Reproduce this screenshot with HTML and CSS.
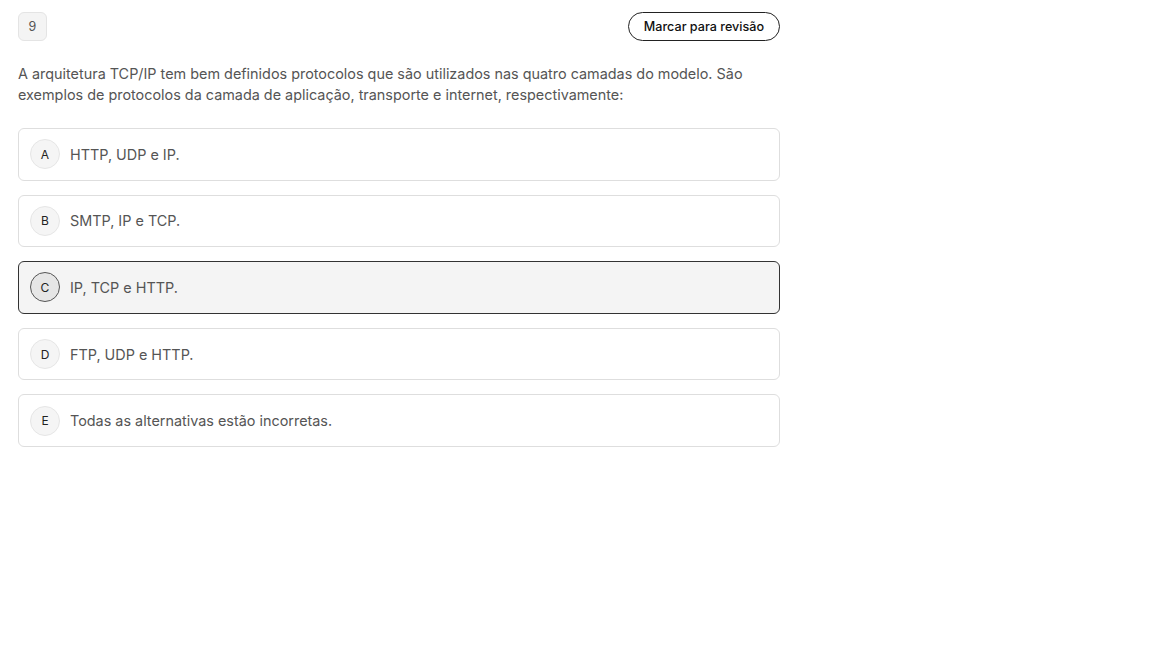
FILE: index.html
```html
<!DOCTYPE html>
<html lang="pt-BR">
<head>
    <meta charset="UTF-8">
    <meta name="viewport" content="width=device-width, initial-scale=1.0">
    <title>Questão 9</title>
    <link rel="stylesheet" href="styles.css">
</head>
<body>
    <div class="question">
        <div class="question-header">
            <span class="question-number">9</span>
            <button type="button" class="review-btn">Marcar para revisão</button>
        </div>

        <p class="statement">A arquitetura TCP/IP tem bem definidos protocolos que são utilizados nas quatro camadas do modelo. São exemplos de protocolos da camada de aplicação, transporte e internet, respectivamente:</p>

        <div class="options">
            <label class="option">
                <span class="letter">A</span>
                <span class="option-text">HTTP, UDP e IP.</span>
            </label>
            <label class="option">
                <span class="letter">B</span>
                <span class="option-text">SMTP, IP e TCP.</span>
            </label>
            <label class="option selected">
                <span class="letter">C</span>
                <span class="option-text">IP, TCP e HTTP.</span>
            </label>
            <label class="option">
                <span class="letter">D</span>
                <span class="option-text">FTP, UDP e HTTP.</span>
            </label>
            <label class="option">
                <span class="letter">E</span>
                <span class="option-text">Todas as alternativas estão incorretas.</span>
            </label>
        </div>
    </div>
</body>
</html>
```

FILE: styles.css
```css
/* Global Styles */
body {
    font-family: Inter, "Noto Sans", Arial, sans-serif;
    background-color: #ffffff;
    color: #333;
    margin: 0;
    padding: 12px 18px;
}

.question {
    width: 762px;
}

.question-header {
    display: flex;
    justify-content: space-between;
    align-items: center;
}

.question-number {
    display: flex;
    justify-content: center;
    align-items: center;
    width: 27px;
    height: 27px;
    border: 1px solid #e4e4e4;
    border-radius: 6px;
    background-color: #f4f4f4;
    font-size: 12.5px;
    color: #555;
}

.review-btn {
    font-family: inherit;
    font-size: 12.6px;
    font-weight: 500;
    color: #111;
    background-color: #fff;
    border: 1px solid #222;
    border-radius: 15px;
    height: 29px;
    padding: 0 15px;
    cursor: pointer;
}

.statement {
    margin: 22px 0 23px;
    font-size: 14.4px;
    line-height: 21px;
    color: #555;
}

.options {
    display: flex;
    flex-direction: column;
    gap: 14px;
}

.option {
    display: flex;
    align-items: center;
    gap: 10px;
    height: 50.6px;
    padding: 0 11px;
    border: 1px solid #dedede;
    border-radius: 6px;
    background-color: #fff;
    cursor: pointer;
}

.option.selected {
    background-color: #f4f4f4;
    border-color: #333;
}

.letter {
    display: flex;
    justify-content: center;
    align-items: center;
    width: 28px;
    height: 28px;
    border: 1px solid #e6e6e6;
    border-radius: 50%;
    background-color: #f5f5f5;
    font-size: 12px;
    color: #222;
}

.option.selected .letter {
    background-color: #e6e6e6;
    border-color: #555;
}

.option-text {
    font-size: 14.4px;
    color: #555;
}
```
